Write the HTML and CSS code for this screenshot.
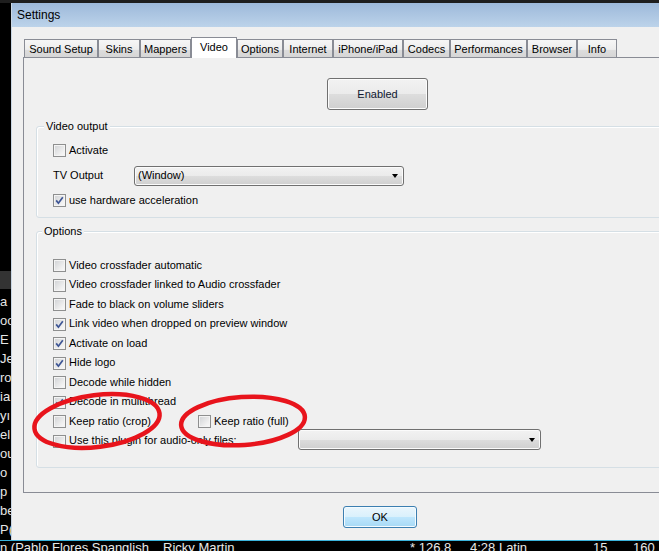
FILE: index.html
```html
<!DOCTYPE html>
<html>
<head>
<meta charset="utf-8">
<title>Settings</title>
<link rel="stylesheet" href="styles.css">
</head>
<body>
<div class="screen">
  <div class="topstrip"></div>
  <div class="middle">
    <div class="bgcol">
      <div class="bgspacer"></div>
      <div class="bgsel"></div>
      <div class="bggap"></div>
      <div class="bgrow">a</div>
      <div class="bgrow">oo</div>
      <div class="bgrow">E</div>
      <div class="bgrow">Je</div>
      <div class="bgrow">ro</div>
      <div class="bgrow">ia</div>
      <div class="bgrow">yı</div>
      <div class="bgrow">el</div>
      <div class="bgrow">ou</div>
      <div class="bgrow">o l</div>
      <div class="bgrow">p</div>
      <div class="bgrow">be</div>
      <div class="bgrow">P(</div>
    </div>
    <div class="dialog">
      <div class="titlebar">Settings</div>
      <div class="client">
        <div class="tabs">
          <div class="tab w74">Sound Setup</div>
          <div class="tab w42">Skins</div>
          <div class="tab w51">Mappers</div>
          <div class="tab active w46">Video</div>
          <div class="tab w46">Options</div>
          <div class="tab w50">Internet</div>
          <div class="tab w70">iPhone/iPad</div>
          <div class="tab w47">Codecs</div>
          <div class="tab w77">Performances</div>
          <div class="tab w50">Browser</div>
          <div class="tab w40">Info</div>
        </div>
        <div class="panel">
          <div class="btn enabled">Enabled</div>
          <div class="group g-video">
            <div class="legend lg-video">Video output</div>
            <div class="row first-v"><span class="cb"></span><span class="t">Activate</span></div>
            <div class="row tvrow"><span class="lbl t">TV Output</span><div class="select sel-tv"><span class="t">(Window)</span><span class="arrow"></span></div></div>
            <div class="row"><span class="cb checked"><svg viewBox="0 0 13 13" width="13" height="13"><path d="M3.2 6.4 L5.4 9.2 L9.8 3.2" fill="none" stroke="#3d5595" stroke-width="1.7"/></svg></span><span class="t">use hardware acceleration</span></div>
          </div>
          <div class="group g-options">
            <div class="legend lg-options">Options</div>
            <div class="orow first-o"><span class="cb"></span><span class="t">Video crossfader automatic</span></div>
            <div class="orow"><span class="cb"></span><span class="t">Video crossfader linked to Audio crossfader</span></div>
            <div class="orow"><span class="cb"></span><span class="t">Fade to black on volume sliders</span></div>
            <div class="orow"><span class="cb checked"><svg viewBox="0 0 13 13" width="13" height="13"><path d="M3.2 6.4 L5.4 9.2 L9.8 3.2" fill="none" stroke="#3d5595" stroke-width="1.7"/></svg></span><span class="t">Link video when dropped on preview window</span></div>
            <div class="orow"><span class="cb checked"><svg viewBox="0 0 13 13" width="13" height="13"><path d="M3.2 6.4 L5.4 9.2 L9.8 3.2" fill="none" stroke="#3d5595" stroke-width="1.7"/></svg></span><span class="t">Activate on load</span></div>
            <div class="orow"><span class="cb checked"><svg viewBox="0 0 13 13" width="13" height="13"><path d="M3.2 6.4 L5.4 9.2 L9.8 3.2" fill="none" stroke="#3d5595" stroke-width="1.7"/></svg></span><span class="t">Hide logo</span></div>
            <div class="orow"><span class="cb"></span><span class="t">Decode while hidden</span></div>
            <div class="orow"><span class="cb checked"><svg viewBox="0 0 13 13" width="13" height="13"><path d="M3.2 6.4 L5.4 9.2 L9.8 3.2" fill="none" stroke="#3d5595" stroke-width="1.7"/></svg></span><span class="t">Decode in multithread</span></div>
            <div class="orow"><div class="crop"><span class="cb"></span><span class="t">Keep ratio (crop)</span></div><span class="cb"></span><span class="t">Keep ratio (full)</span></div>
            <div class="orow lastrow"><span class="cb"></span><span class="pluglbl t">Use this plugin for audio-only files:</span><div class="select sel-plug"><span></span><span class="arrow"></span></div></div>
          </div>
        </div>
        <div class="okrow"><div class="btn ok">OK</div></div>
      </div>
    </div>
  </div>
  <div class="bottomstrip">
    <span class="c1">n (Pablo Flores Spanglish</span>
    <span class="c2">Ricky Martin</span>
    <span class="c3">* 126.8</span>
    <span class="c4">4:28 Latin</span>
    <span class="c5">15</span>
    <span class="c6">160</span>
  </div>
</div>
<svg class="annot" width="659" height="551" viewBox="0 0 659 551">
  <ellipse cx="97" cy="421" rx="63" ry="26" transform="rotate(-7 97 421)" fill="none" stroke="#e8141c" stroke-width="4.5"/>
  <ellipse cx="243" cy="421" rx="62" ry="24" transform="rotate(-4 243 421)" fill="none" stroke="#e8141c" stroke-width="4.5"/>
</svg>
</body>
</html>
```
FILE: styles.css
```css
html, body {
  margin: 0;
  padding: 0;
}
body {
  width: 659px;
  height: 551px;
  overflow: hidden;
  background: #000;
  position: relative;
  font-family: "Liberation Sans", Arial, sans-serif;
  font-size: 11px;
  color: #000;
}
.screen {
  width: 659px;
  height: 551px;
  overflow: hidden;
}
.topstrip {
  height: 3px;
  background: #1e1e1e;
}
.middle {
  display: flex;
  height: 537px;
}
.bgcol {
  width: 11px;
  flex: none;
  background: #000;
  overflow: hidden;
  color: #e6e6e6;
  font-size: 13px;
}
.bgspacer { height: 268px; }
.bgsel { height: 18px; background: #333; }
.bggap { height: 3px; }
.bgrow {
  height: 19px;
  line-height: 19px;
  white-space: nowrap;
  overflow: hidden;
}
.dialog {
  flex: none;
  width: 700px;
  border-left: 1px solid #c9d6e3;
  display: flex;
  flex-direction: column;
}
.titlebar {
  height: 24px;
  line-height: 25px;
  padding-left: 5px;
  font-size: 12px;
  background: linear-gradient(to bottom, #9db9da, #bcd3ea);
  color: #000;
}
.client {
  height: 513px;
  background: #f0f0f0;
  padding-top: 10px;
  box-sizing: border-box;
}
.tabs {
  display: flex;
  align-items: flex-end;
  height: 20px;
  margin-left: 12px;
}
.tab {
  box-sizing: border-box;
  height: 18px;
  line-height: 18px;
  text-align: center;
  border: 1px solid #898c95;
  border-bottom: none;
  background: linear-gradient(to bottom, #f6f6f6 0%, #ededed 55%, #dcdcdc 62%, #d6d6d6 100%);
  white-space: nowrap;
}
.tab.active {
  height: 21px;
  line-height: 18px;
  margin-bottom: -1px;
  background: #fff;
  position: relative;
  z-index: 1;
}
.w74 { width: 74px; }
.w42 { width: 42px; }
.w51 { width: 51px; }
.w46 { width: 46px; }
.w50 { width: 50px; }
.w70 { width: 70px; }
.w47 { width: 47px; }
.w77 { width: 77px; }
.w40 { width: 40px; }
.panel {
  margin-left: 11px;
  width: 680px;
  height: 436px;
  box-sizing: border-box;
  border: 1px solid #898c95;
  background: #f0f0f0;
  overflow: hidden;
}
.btn {
  box-sizing: border-box;
  border: 1px solid #707070;
  border-radius: 3px;
  background: linear-gradient(to bottom, #f2f2f2 0%, #ebebeb 50%, #dddddd 51%, #cfcfcf 100%);
  box-shadow: inset 0 0 0 1px #fcfcfc;
  display: flex;
  align-items: center;
  justify-content: center;
}
.enabled {
  width: 101px;
  height: 32px;
  margin-top: 20px;
  margin-left: 303px;
  color: #101830;
}
.group {
  margin-left: 12px;
  width: 640px;
  box-sizing: border-box;
  border: 1px solid #d5dfe5;
  border-radius: 3px;
  box-shadow: inset 1px 1px 0 #fff;
  padding-left: 16px;
}
.g-video {
  margin-top: 16px;
  padding-bottom: 7px;
}
.g-options {
  margin-top: 13px;
  padding-bottom: 16px;
}
.legend {
  width: fit-content;
  margin-top: -7px;
  line-height: 13px;
  height: 13px;
  padding: 0 2px;
  background: #f0f0f0;
}
.lg-video { margin-left: -9px; }
.lg-options { margin-left: -11px; }
.row {
  display: flex;
  align-items: center;
  height: 19px;
}
.first-v { margin-top: 8px; }
.tvrow { height: 31px; }
.lbl {
  width: 81px;
  flex: none;
}
.t {
  padding-bottom: 2px;
}
.orow {
  display: flex;
  align-items: center;
  height: 19.5px;
  white-space: nowrap;
}
.first-o { margin-top: 18px; }
.cb {
  flex: none;
  width: 13px;
  height: 13px;
  box-sizing: border-box;
  border: 1px solid #8e8f8f;
  background: linear-gradient(135deg, #cfd1d4 0%, #f0f0f0 70%, #fafafa 100%);
  box-shadow: inset 0 0 0 1px #f4f4f4;
  margin-right: 3px;
}
.cb svg {
  display: block;
  margin: -1px;
}
.crop {
  display: flex;
  align-items: center;
  width: 145px;
  flex: none;
}
.pluglbl {
  width: 229px;
  flex: none;
  overflow: hidden;
}
.select {
  box-sizing: border-box;
  height: 20px;
  border: 1px solid #707070;
  border-radius: 3px;
  background: linear-gradient(to bottom, #f2f2f2 0%, #ebebeb 50%, #dddddd 51%, #cfcfcf 100%);
  box-shadow: inset 0 0 0 1px #fbfbfb;
  display: flex;
  align-items: center;
  justify-content: space-between;
  padding-left: 3px;
  padding-right: 5px;
  flex: none;
}
.sel-tv { width: 270px; }
.sel-plug { width: 243px; height: 21px; margin-top: -3px; }
.arrow {
  width: 0;
  height: 0;
  border-left: 3.5px solid transparent;
  border-right: 3.5px solid transparent;
  border-top: 4px solid #000;
}
.okrow {
  margin-top: 13px;
  padding-left: 331px;
}
.ok {
  width: 74px;
  height: 22px;
  border-color: #3c7fb1;
  background: linear-gradient(to bottom, #eaf6fd 0%, #d9f0fc 50%, #bee6fd 51%, #a7d9f5 100%);
  box-shadow: inset 0 0 0 1px #f4fbff;
}
.bottomstrip {
  height: 11px;
  box-sizing: border-box;
  border-top: 1px solid #3bb3dc;
  background: #000;
  color: #e8e8e8;
  font-size: 13px;
  line-height: 13px;
  display: flex;
  white-space: nowrap;
  overflow: hidden;
}
.bottomstrip span { flex: none; overflow: hidden; }
.c1 { width: 163px; }
.c2 { width: 247px; }
.c3 { width: 60px; }
.c4 { width: 123px; }
.c5 { width: 40px; }
.c6 { width: 30px; }
.annot {
  position: absolute;
  left: 0;
  top: 0;
  pointer-events: none;
}
```
